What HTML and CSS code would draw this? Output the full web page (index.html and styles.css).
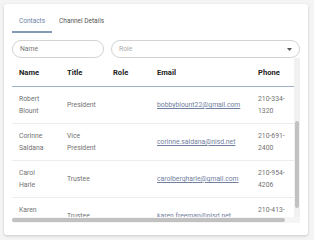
FILE: index.html
```html
<!DOCTYPE html>
<html lang="en">
<head>
    <meta charset="UTF-8">
    <meta name="viewport" content="width=device-width, initial-scale=1.0">
    <title>Contacts</title>
    <link rel="stylesheet" href="styles.css">
</head>
<body>
    <div class="card">
        <div class="tabs">
            <div class="tab active">Contacts</div>
            <div class="tab">Channel Details</div>
        </div>
        <div class="filters">
            <div class="field name-field">Name</div>
            <div class="field role-field">
                <span>Role</span>
                <svg width="5" height="3" viewBox="0 0 5 3"><path d="M0 0h5L2.5 3z" fill="#555"/></svg>
            </div>
        </div>
        <div class="table-frame">
            <div class="table-view" id="tableView">
                <table>
                    <thead>
                        <tr>
                            <th class="col-name">Name</th>
                            <th class="col-title">Title</th>
                            <th class="col-role">Role</th>
                            <th class="col-email">Email</th>
                            <th class="col-phone">Phone</th>
                        </tr>
                    </thead>
                    <tbody>
                        <tr>
                            <td>Gerry Rodriguez</td>
                            <td>Secretary</td>
                            <td></td>
                            <td><a href="#">gerry.rodriguez@nisd.net</a></td>
                            <td>210-397-8500</td>
                        </tr>
                        <tr>
                            <td>Olga Hernandez</td>
                            <td>Trustee</td>
                            <td></td>
                            <td><a href="#">olga.hernandez@nisd.net</a></td>
                            <td>210-397-8501</td>
                        </tr>
                        <tr>
                            <td>David Salazar</td>
                            <td>Trustee</td>
                            <td></td>
                            <td><a href="#">david.salazar@nisd.net</a></td>
                            <td>210-397-8502</td>
                        </tr>
                        <tr>
                            <td>Robert Blount</td>
                            <td>President</td>
                            <td></td>
                            <td><a href="#">bobbyblount22@gmail.com</a></td>
                            <td>210-334-1320</td>
                        </tr>
                        <tr>
                            <td>Corinne Saldana</td>
                            <td>Vice President</td>
                            <td></td>
                            <td><a href="#">corinne.saldana@nisd.net</a></td>
                            <td>210-691-2400</td>
                        </tr>
                        <tr>
                            <td>Carol Harle</td>
                            <td>Trustee</td>
                            <td></td>
                            <td><a href="#">carolbergharle@gmail.com</a></td>
                            <td>210-954-4206</td>
                        </tr>
                        <tr>
                            <td>Karen Freeman</td>
                            <td>Trustee</td>
                            <td></td>
                            <td><a href="#">karen.freeman@nisd.net</a></td>
                            <td>210-413-5574</td>
                        </tr>
                    </tbody>
                </table>
            </div>
            <div class="vtrack"><div class="vthumb"></div></div>
            <div class="htrack"><div class="hthumb"></div></div>
            <div class="corner"></div>
        </div>
    </div>
    <script>
        document.getElementById("tableView").scrollTop = 111;
    </script>
</body>
</html>
```

FILE: styles.css
```css
body {
    margin: 0;
    padding: 4px;
    background-color: #f4f4f4;
    font-family: Roboto, "Liberation Sans", sans-serif;
    color: #666666;
}

.card {
    width: 304px;
    height: 231px;
    box-sizing: border-box;
    padding: 8px 8px 0 8px;
    background-color: #ffffff;
    border-radius: 3px;
    box-shadow: 0 1px 3px rgba(0, 0, 0, 0.18);
}

.tabs {
    display: flex;
}

.tab {
    padding: 5px 7px 6px 7px;
    font-size: 6.5px;
    line-height: 8px;
    color: #555555;
    border-bottom: 2px solid transparent;
}

.tab.active {
    color: #6b82a6;
    border-bottom-color: #8498b7;
}

.filters {
    display: flex;
    gap: 7px;
    margin-top: 7px;
}

.field {
    height: 18px;
    box-sizing: border-box;
    border: 1px solid #d3d3d3;
    border-radius: 9px;
    padding: 0 7px;
    font-size: 6.8px;
    display: flex;
    align-items: center;
}

.name-field {
    width: 92px;
    color: #777777;
}

.role-field {
    flex: 1;
    justify-content: space-between;
    color: #aaaaaa;
}

/* table + fake scrollbars */
.table-frame {
    display: grid;
    grid-template-columns: 282px 6px;
    grid-template-rows: 159px 6px;
}

.table-view {
    overflow: hidden;
}

.vtrack {
    background-color: #f1f1f1;
}

.vthumb {
    width: 4px;
    height: 87px;
    margin: 63px 0 0 1px;
    border-radius: 2px;
    background-color: #c1c1c1;
}

.htrack {
    background-color: #f5f5f5;
    display: flex;
    align-items: center;
}

.hthumb {
    width: 273px;
    height: 4px;
    border-radius: 2px;
    background-color: #c1c1c1;
}

.corner {
    background-color: #f5f5f5;
}

table {
    width: 291px;
    border-collapse: separate;
    border-spacing: 0;
    table-layout: fixed;
}

th {
    position: sticky;
    top: 0;
    height: 29px;
    padding: 0 7px;
    text-align: left;
    font-size: 7.6px;
    font-weight: bold;
    color: #222222;
    background-color: #ffffff;
    border-bottom: 1px solid #9fb1c9;
}

.col-name { width: 48px; }
.col-title { width: 46px; }
.col-role { width: 44px; }
.col-email { width: 101px; }
.col-phone { width: 52px; }

th, td {
    box-sizing: border-box;
}

td {
    padding: 6px 7px;
    font-size: 6.8px;
    line-height: 12px;
    color: #727272;
    border-bottom: 1px solid #ececec;
    vertical-align: middle;
}

td:first-child {
    padding-right: 11px;
}

td a {
    color: #71809e;
}
```
